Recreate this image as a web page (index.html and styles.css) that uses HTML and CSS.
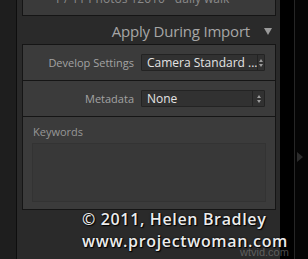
FILE: index.html
```html
<!DOCTYPE html>
<html lang="en">
<head>
    <meta charset="UTF-8">
    <title>Apply During Import</title>
    <link rel="stylesheet" href="styles.css">
</head>
<body>
    <div class="left-strip"></div>

    <div class="panel">
        <!-- destination summary, scrolled off the top -->
        <div class="top-box">
            <span>1 / 11 Photos 12010 - daily walk</span>
        </div>

        <div class="panel-header">
            <span class="panel-title">Apply During Import</span>
            <span class="disclosure"></span>
        </div>

        <div class="section-group">
            <div class="row">
                <label class="row-label">Develop Settings</label>
                <div class="popup">
                    <span class="popup-value">Camera Standard ...</span>
                    <span class="stepper"><i class="up"></i><i class="down"></i></span>
                </div>
            </div>
            <div class="row">
                <label class="row-label">Metadata</label>
                <div class="popup">
                    <span class="popup-value">None</span>
                    <span class="stepper"><i class="up"></i><i class="down"></i></span>
                </div>
            </div>
            <div class="keywords">
                <label class="keywords-label">Keywords</label>
                <div class="keywords-field"></div>
            </div>
        </div>
    </div>

    <div class="gutter"></div>
    <div class="right-strip">
        <span class="expand-arrow"></span>
    </div>

    <!-- watermark over the screenshot -->
    <div class="site-mark">wtvid.com</div>
    <div class="watermark">
        <div>&copy; 2011, Helen Bradley</div>
        <div>www.projectwoman.com</div>
    </div>
</body>
</html>
```

FILE: styles.css
```css
body {
    margin: 0;
    width: 308px;
    height: 259px;
    overflow: hidden;
    display: flex;
    background: #000;
    font-family: "Open Sans", Arial, sans-serif;
    position: relative;
}
.left-strip {
    width: 16px;
    background: #1e1e1e;
    border-right: 1px solid #0e0e0e;
}
.panel {
    width: 254px;
    padding: 0 4px 0 5px;
    background: #2a2a2a;
}
.top-box {
    height: 24px;
    margin-top: -10px;
    border: 1px solid #151515;
    background: #3a3a3a;
    color: #8a8a8a;
    font-size: 12px;
    line-height: 16px;
    padding-left: 31px;
    overflow: hidden;
}
.panel-header {
    height: 28px;
    display: flex;
    align-items: center;
    justify-content: flex-end;
    padding-right: 4px;
}
.panel-title {
    color: #a6a6a6;
    font-size: 15px;
    letter-spacing: -0.2px;
    margin-right: 14px;
    margin-top: 2px;
}
.disclosure {
    width: 0;
    height: 0;
    border-left: 4.5px solid transparent;
    border-right: 4.5px solid transparent;
    border-top: 7px solid #9a9a9a;
    margin-top: 2px;
}
.section-group {
    border: 1px solid #151515;
    background: #3b3b3b;
}
.row {
    height: 35px;
    display: flex;
    align-items: center;
    border-bottom: 1px solid #151515;
}
.row-label {
    width: 111px;
    text-align: right;
    color: #a3a3a3;
    font-size: 11px;
    margin-right: 7px;
}
.popup {
    width: 122px;
    height: 15px;
    display: flex;
    align-items: center;
    border: 1px solid #232323;
    background: #313131;
    border-radius: 1px;
}
.popup-value {
    flex: 1;
    color: #e4e4e4;
    font-size: 12px;
    padding-left: 5px;
    white-space: nowrap;
}
.stepper {
    width: 11px;
    height: 15px;
    border-left: 1px solid #232323;
    display: flex;
    flex-direction: column;
    align-items: center;
    justify-content: center;
    gap: 2px;
}
.stepper i {
    width: 0;
    height: 0;
    border-left: 2.5px solid transparent;
    border-right: 2.5px solid transparent;
}
.stepper .up {
    border-bottom: 3px solid #9c9c9c;
}
.stepper .down {
    border-top: 3px solid #9c9c9c;
}
.keywords {
    height: 92px;
    padding: 7px 9px 0 9px;
    box-sizing: border-box;
}
.keywords-label {
    display: block;
    color: #979797;
    font-size: 11px;
    line-height: 16px;
    padding-left: 1px;
}
.keywords-field {
    height: 57px;
    margin-top: 3px;
    border: 1px solid #333;
    background: #383838;
}
.gutter {
    width: 14px;
    background: #000;
    border-right: 1px solid #262626;
}
.right-strip {
    flex: 1;
    background: #050505;
    position: relative;
}
.expand-arrow {
    position: absolute;
    left: 2px;
    top: 152px;
    width: 0;
    height: 0;
    border-top: 5.5px solid transparent;
    border-bottom: 5.5px solid transparent;
    border-left: 6px solid #2c2c2c;
}
.watermark {
    position: absolute;
    left: 82px;
    top: 208px;
    color: #ececec;
    font-size: 16px;
    font-weight: 600;
    line-height: 22px;
    letter-spacing: 0.65px;
    text-shadow: 1px 1px 1px #000, 0 0 2px #000;
}
.site-mark {
    position: absolute;
    left: 240px;
    top: 246px;
    color: rgba(150, 150, 150, 0.5);
    font-family: Arial, sans-serif;
    font-size: 11px;
}
```
